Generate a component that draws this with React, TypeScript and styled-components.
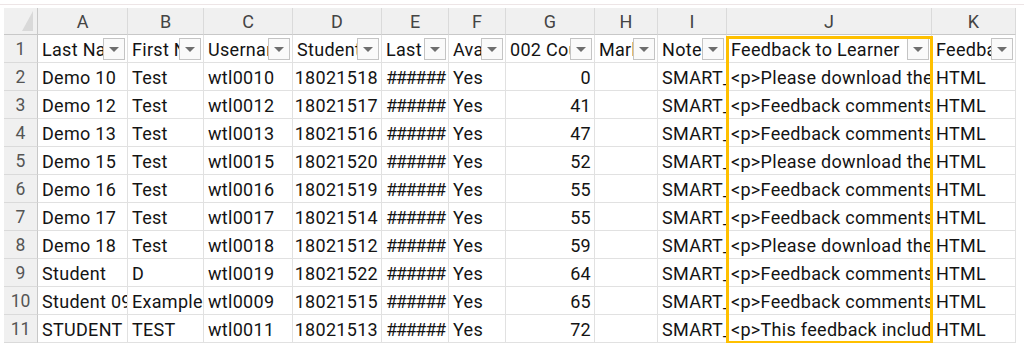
import React from "react";
import styled, { createGlobalStyle } from "styled-components";

const GlobalStyle = createGlobalStyle`
  html, body { margin: 0; padding: 0; background: #ffffff; }
  body { font-family: Roboto, "Liberation Sans", sans-serif; }
`;

type Align = "left" | "right";
interface Col { letter: string; width: number; header: string; align: Align; }

const COLS: Col[] = [
  { letter: "A", width: 90, header: "Last Name", align: "left" },
  { letter: "B", width: 76, header: "First Name", align: "left" },
  { letter: "C", width: 89, header: "Username", align: "left" },
  { letter: "D", width: 89, header: "Student ID", align: "right" },
  { letter: "E", width: 67, header: "Last Access", align: "left" },
  { letter: "F", width: 57, header: "Availability", align: "left" },
  { letter: "G", width: 89, header: "002 Count", align: "right" },
  { letter: "H", width: 63, header: "Marks", align: "left" },
  { letter: "I", width: 69, header: "Notes", align: "left" },
  { letter: "J", width: 205, header: "Feedback to Learner", align: "left" },
  { letter: "K", width: 84, header: "Feedback Format", align: "left" },
];

const ROWS: string[][] = [
  ["Demo 10", "Test", "wtl0010", "18021518", "######", "Yes", "0", "", "SMART_Feedback", "<p>Please download the", "HTML"],
  ["Demo 12", "Test", "wtl0012", "18021517", "######", "Yes", "41", "", "SMART_Feedback", "<p>Feedback comments", "HTML"],
  ["Demo 13", "Test", "wtl0013", "18021516", "######", "Yes", "47", "", "SMART_Feedback", "<p>Feedback comments", "HTML"],
  ["Demo 15", "Test", "wtl0015", "18021520", "######", "Yes", "52", "", "SMART_Feedback", "<p>Please download the", "HTML"],
  ["Demo 16", "Test", "wtl0016", "18021519", "######", "Yes", "55", "", "SMART_Feedback", "<p>Feedback comments", "HTML"],
  ["Demo 17", "Test", "wtl0017", "18021514", "######", "Yes", "55", "", "SMART_Feedback", "<p>Feedback comments", "HTML"],
  ["Demo 18", "Test", "wtl0018", "18021512", "######", "Yes", "59", "", "SMART_Feedback", "<p>Please download the", "HTML"],
  ["Student", "D", "wtl0019", "18021522", "######", "Yes", "64", "", "SMART_Feedback", "<p>Feedback comments", "HTML"],
  ["Student 09", "Example", "wtl0009", "18021515", "######", "Yes", "65", "", "SMART_Feedback", "<p>Feedback comments", "HTML"],
  ["STUDENT 11", "TEST", "wtl0011", "18021513", "######", "Yes", "72", "", "SMART_Feedback", "<p>This feedback includes", "HTML"],
];

const Page = styled.div`
  padding: 4px 0 0 0;
`;

const TopEdge = styled.div`
  height: 1px;
  background: #ede5e6;
  margin-bottom: 3px;
`;

const Grid = styled.div<{ $template: string }>`
  display: grid;
  grid-template-columns: ${(p) => p.$template};
  grid-template-rows: 27px repeat(11, 28px);
  margin-left: 4px;
  width: max-content;
  color: #141414;
  font-size: 18px;
  letter-spacing: 0.3px;
`;

const Corner = styled.div`
  grid-column: 1;
  grid-row: 1;
  background: #f0f0f0;
  border-right: 1px solid #c8c8c8;
  border-bottom: 1px solid #c8c8c8;
  display: flex;
  align-items: flex-end;
  justify-content: flex-end;
  padding: 0 4px 3px 0;
  box-sizing: border-box;
`;

const CornerMark = styled.div`
  width: 0;
  height: 0;
  border-left: 11px solid transparent;
  border-bottom: 20px solid #d9d9d9;
`;

interface Pos { $c: number; $r: number; }

const ColHead = styled.div<Pos>`
  grid-column: ${(p) => p.$c};
  grid-row: ${(p) => p.$r};
  background: #f0f0f0;
  border-right: 1px solid #dadada;
  border-bottom: 1px solid #c8c8c8;
  display: flex;
  align-items: center;
  justify-content: center;
  color: #444;
  font-size: 18px;
  letter-spacing: 0;
  box-sizing: border-box;
  padding-top: 1px;
`;

const RowHead = styled.div<Pos>`
  grid-column: ${(p) => p.$c};
  grid-row: ${(p) => p.$r};
  background: #f0f0f0;
  border-right: 1px solid #c8c8c8;
  border-bottom: 1px solid #dadada;
  display: flex;
  align-items: center;
  justify-content: center;
  color: #555;
  font-size: 17.5px;
  letter-spacing: 0;
  box-sizing: border-box;
  padding-top: 1px;
`;

const Cell = styled.div<Pos & { $align: Align; $tight?: boolean }>`
  grid-column: ${(p) => p.$c};
  grid-row: ${(p) => p.$r};
  border-right: 1px solid #e1e1e1;
  border-bottom: 1px solid #e1e1e1;
  box-sizing: border-box;
  display: flex;
  align-items: center;
  justify-content: ${(p) => (p.$align === "right" ? "flex-end" : "flex-start")};
  padding: 1px 3px 0 4px;
  overflow: hidden;
  white-space: nowrap;
  min-width: 0;
  background: #fff;
  letter-spacing: ${(p) => (p.$tight ? "-1.3px" : "inherit")};
`;

const HeadCell = styled(Cell)`
  justify-content: space-between;
  padding-right: 2px;
`;

const HeadText = styled.span`
  flex: 1 1 auto;
  min-width: 0;
  overflow: hidden;
  white-space: nowrap;
`;

const FilterBtn = styled.div`
  flex: none;
  width: 22px;
  height: 22px;
  box-sizing: border-box;
  border: 1px solid #c4c4c4;
  background: #fafafa;
  display: flex;
  align-items: center;
  justify-content: center;
`;

const Arrow = styled.div`
  width: 0;
  height: 0;
  border-left: 5px solid transparent;
  border-right: 5px solid transparent;
  border-top: 5px solid #6e6e6e;
`;

const Highlight = styled.div`
  grid-column: 11;
  grid-row: 2 / 13;
  margin: 1px -1px -1px -1px;
  border: 3px solid #ffc000;
  box-sizing: border-box;
  pointer-events: none;
  z-index: 2;
`;

export default function App() {
  const template = ["34px", ...COLS.map((c) => `${c.width}px`)].join(" ");
  return (
    <Page>
      <GlobalStyle />
      <TopEdge />
      <Grid $template={template}>
        <Corner>
          <CornerMark />
        </Corner>
        {COLS.map((c, ci) => (
          <ColHead key={c.letter} $c={ci + 2} $r={1}>
            {c.letter}
          </ColHead>
        ))}
        <RowHead $c={1} $r={2}>1</RowHead>
        {COLS.map((c, ci) => (
          <HeadCell key={"h" + c.letter} $align="left" $c={ci + 2} $r={2}>
            <HeadText>{c.header}</HeadText>
            <FilterBtn>
              <Arrow />
            </FilterBtn>
          </HeadCell>
        ))}
        {ROWS.map((row, ri) => (
          <React.Fragment key={ri}>
            <RowHead $c={1} $r={ri + 3}>{ri + 2}</RowHead>
            {row.map((v, ci) => (
              <Cell
                key={ci}
                $align={COLS[ci].align}
                $tight={v.startsWith("#")}
                $c={ci + 2}
                $r={ri + 3}
              >
                {v}
              </Cell>
            ))}
          </React.Fragment>
        ))}
        <Highlight />
      </Grid>
    </Page>
  );
}
